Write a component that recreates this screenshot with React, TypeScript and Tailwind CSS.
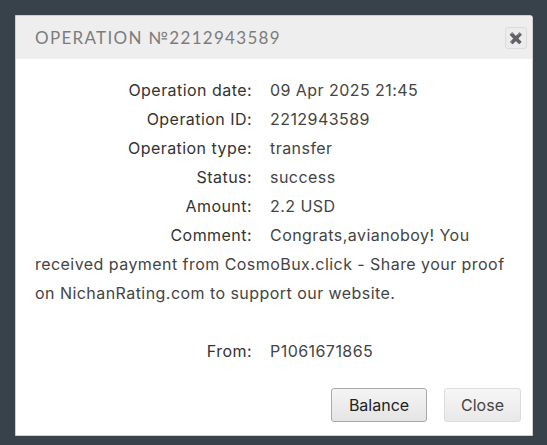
import React from "react";

const rows: { label: string; value: string }[] = [
  { label: "Operation date:", value: "09 Apr 2025 21:45" },
  { label: "Operation ID:", value: "2212943589" },
  { label: "Operation type:", value: "transfer" },
  { label: "Status:", value: "success" },
  { label: "Amount:", value: "2.2 USD" },
  {
    label: "Comment:",
    value:
      "Congrats,avianoboy! You received payment from CosmoBux.click - Share your proof on NichanRating.com to support our website.",
  },
];

function Row({ label, value }: { label: string; value: string }) {
  return (
    <div>
      <span className="inline-block w-[217px] mr-[18px] text-right text-[#333]">{label}</span>
      <span className="text-[#444]">{value}</span>
    </div>
  );
}

export default function App() {
  return (
    <div className="w-[547px] h-[445px] bg-[#37424b] pt-[15px] pl-[15px]">
      <div className="w-[518px] h-[421px] bg-white border border-[#cfcfcf] rounded-tr-[3px] flex flex-col">
        {/* Title bar */}
        <div className="h-[43px] bg-[#eeeeee] flex items-center justify-between pl-[19px] pr-[5px]">
          <h2 className="font-['Lato',sans-serif] text-[17px] tracking-[1.3px] text-[#7c7c7c] uppercase">
            Operation №2212943589
          </h2>
          <button className="w-[22px] h-[22px] rounded-[3px] border border-[#dcdcdc] bg-[#ececec] flex items-center justify-center text-[#9a9a9a] text-[11px] font-bold leading-none">
            ✖
          </button>
        </div>

        {/* Body */}
        <div className="pt-[17px] pl-[19px] pr-[19px] text-[16px] tracking-[0.45px] leading-[29px] font-['Inter',sans-serif]">
          {rows.map((r) => (
            <Row key={r.label} label={r.label} value={r.value} />
          ))}
          <div className="h-[29px]" />
          <Row label="From:" value="P1061671865" />
        </div>

        {/* Footer */}
        <div className="mt-auto flex justify-end gap-[17px] pr-[11px] pb-[13px] font-['Inter',sans-serif]">
          <button className="w-[96px] h-[34px] rounded-[3px] border border-[#a9a9a9] bg-gradient-to-b from-[#f4f4f4] to-[#e4e4e4] text-[16px] text-[#222]">
            Balance
          </button>
          <button className="w-[77px] h-[34px] rounded-[3px] border border-[#dcdcdc] bg-gradient-to-b from-[#f6f6f6] to-[#e9e9e9] text-[16px] text-[#444]">
            Close
          </button>
        </div>
      </div>
    </div>
  );
}
